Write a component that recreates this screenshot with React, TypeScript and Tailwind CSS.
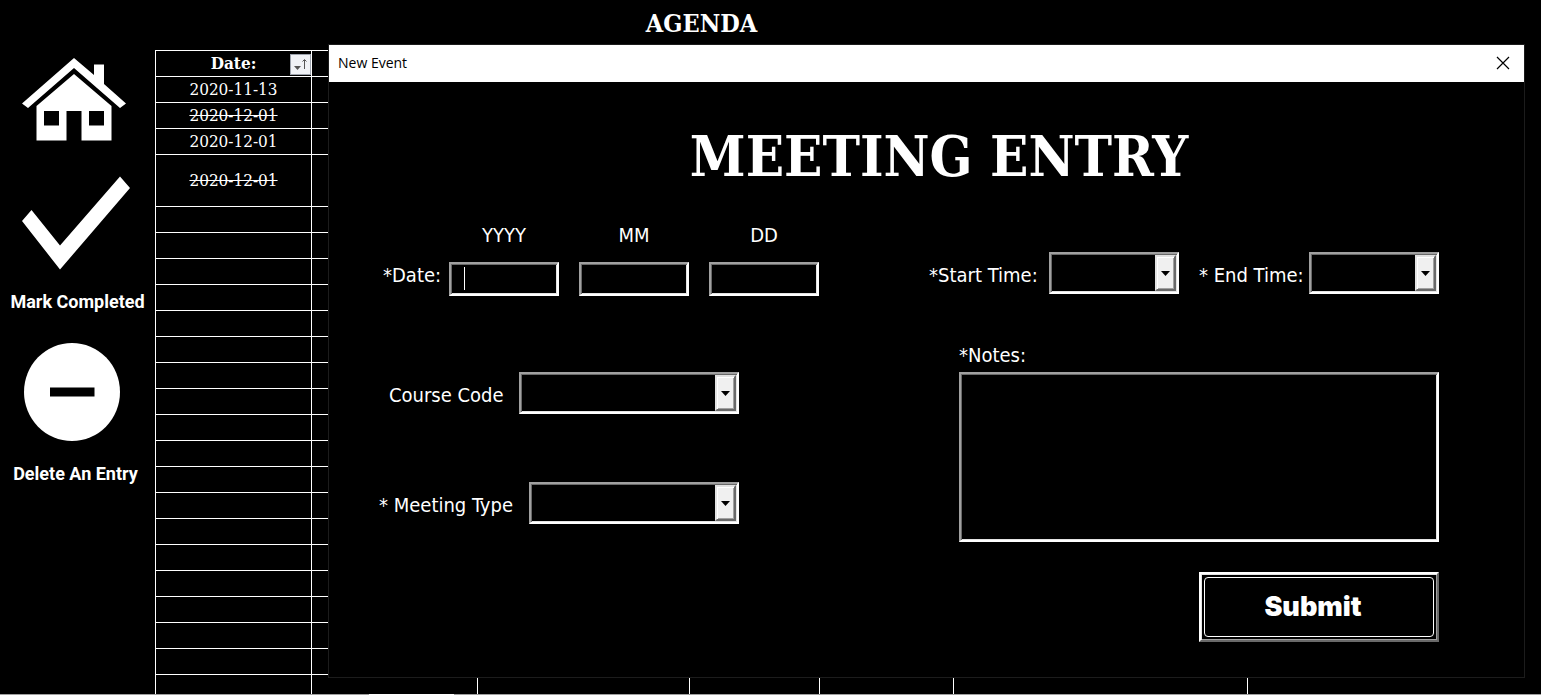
import type { ReactNode } from "react";

const slab = "font-['Roboto_Slab','DejaVu_Serif_Condensed','DejaVu_Serif',serif]";
const labelFont = "font-['DejaVu_Sans_Condensed','DejaVu_Sans',sans-serif] text-xl leading-6 text-white whitespace-nowrap";
const sunken =
  "rounded-none border-2 border-t-[#a0a0a0] border-l-[#a0a0a0] border-r-white border-b-white bg-black text-white outline-none shadow-[inset_1px_1px_0_#696969,inset_-1px_-1px_0_#e3e3e3]";

const rows = [
  { date: "2020-11-13", done: false, tall: false },
  { date: "2020-12-01", done: true, tall: false },
  { date: "2020-12-01", done: false, tall: false },
  { date: "2020-12-01", done: true, tall: true },
  ...Array.from({ length: 19 }, () => ({ date: "", done: false, tall: false })),
];

function Sidebar() {
  return (
    <nav className="flex w-[155px] shrink-0 flex-col font-['Roboto',sans-serif] text-lg leading-6 font-bold text-white">
      <button type="button" aria-label="Home" className="mt-[57px] ml-[21px] w-[106px]">
        <svg viewBox="0 0 106 84" className="block h-[84px] w-[106px]" fill="white">
          <path d="M53 1 73 18V7.500h10V27l22 19.500-6 4.500L53 11 7 51 1 46.500Z" />
          <path fillRule="evenodd" d="M53 17 90.500 49V83.500H60.500V54H45.500V83.500H15.500V49ZM23 54V68.500H38V54ZM68 54V68.500H83V54Z" />
        </svg>
      </button>
      <button type="button" className="mt-[35px] flex w-full flex-col items-center pr-1 whitespace-nowrap">
        <svg viewBox="0 0 110 94" className="h-[94px] w-[110px]" fill="white">
          <path d="M1 45 10.500 34 39 69.500 99 0.500 109 12 39 93.500Z" />
        </svg>
        <span className="mt-5 pl-1">Mark Completed</span>
      </button>
      <button type="button" className="mt-[29px] flex w-full flex-col items-center pr-3 whitespace-nowrap">
        <svg viewBox="0 0 96 98" className="h-[98px] w-24">
          <ellipse cx="48" cy="49" rx="48" ry="49" fill="white" />
          <rect x="26" y="44.500" width="44.500" height="9" fill="black" />
        </svg>
        <span className="mt-[21px] pl-2">Delete An Entry</span>
      </button>
    </nav>
  );
}

function Agenda() {
  return (
    <main className={`${slab} w-[1093px] shrink-0 text-white`}>
      <h1 className="flex h-[50px] items-center justify-center pb-0.5 text-[25px] leading-8 font-bold">AGENDA</h1>
      <table className="w-full table-fixed border-collapse text-center text-[17px] leading-5">
        <colgroup>
          <col className="w-[156px]" />
          <col className="w-[166px]" />
          <col className="w-[212px]" />
          <col className="w-[130px]" />
          <col className="w-[134px]" />
          <col />
        </colgroup>
        <thead>
          <tr className="h-[26px]">
            <th className="relative border border-white p-0 pb-0.5 font-bold">
              Date:
              <button
                type="button"
                aria-label="Sort by date"
                className="absolute top-[3px] right-0 size-[21px] border border-[#9da3ad] bg-[#f0f2f6]"
              >
                <svg viewBox="0 0 19 19" className="size-[19px]">
                  <path d="M3 11h7L6.500 15Z" fill="#555" />
                  <path d="M13.500 14V5M11.500 6.500l2-2 2 2" fill="none" stroke="#555" />
                </svg>
              </button>
            </th>
            {[1, 2, 3, 4, 5].map((c) => (
              <th key={c} className="border border-white p-0" />
            ))}
          </tr>
        </thead>
        <tbody>
          {rows.map((row, i) => (
            <tr key={i} className={row.tall ? "h-[52px]" : "h-[26px]"}>
              <td className={row.done ? "border border-white p-0 pb-0.5 line-through" : "border border-white p-0 pb-0.5"}>
                {row.date}
              </td>
              {[1, 2, 3, 4, 5].map((c) => (
                <td key={c} className="border border-white p-0" />
              ))}
            </tr>
          ))}
        </tbody>
      </table>
    </main>
  );
}

function Dropdown({ id, className }: { id: string; className: string }) {
  return (
    <span className={`relative block h-[42px] shrink-0 ${className}`}>
      <select id={id} className={`${sunken} block h-full w-full appearance-none`} />
      <span className="pointer-events-none absolute top-[3px] right-[3px] bottom-[3px] flex w-[21px] border-2 border-t-[#e3e3e3] border-r-[#696969] border-b-[#696969] border-l-[#e3e3e3] bg-[#f0f0f0] shadow-[inset_1px_1px_0_white,inset_-1px_-1px_0_#a0a0a0]">
        <svg viewBox="0 0 9 5" className="m-auto h-[5px] w-[9px]">
          <path d="M0 0h9L4.500 5Z" />
        </svg>
      </span>
    </span>
  );
}

function Label({ id, className, children }: { id: string; className?: string; children: ReactNode }) {
  return (
    <label htmlFor={id} className={`${labelFont} ${className ?? ""}`}>
      {children}
    </label>
  );
}

function EventDialog() {
  return (
    <section
      role="dialog"
      aria-labelledby="dialog-title"
      className="absolute top-11 right-4 left-[328px] border border-[#1c1c1c] bg-black"
    >
      <header className="flex h-[37px] items-center justify-between bg-white pr-[14px] pb-px pl-[9px] text-black">
        <h2 id="dialog-title" className="font-['Open_Sans','Noto_Sans',sans-serif] text-sm leading-5">
          New Event
        </h2>
        <button type="button" aria-label="Close">
          <svg viewBox="0 0 14 14" className="size-[14px]" stroke="black" strokeWidth="1.200">
            <path d="M1 1 13 13M13 1 1 13" />
          </svg>
        </button>
      </header>
      <form className="pr-[85px] pb-[35px] pl-[50px]" onSubmit={(e) => e.preventDefault()}>
        <h3 className={`${slab} pt-[38px] pl-[60px] text-center text-[56px] leading-[72px] font-bold text-white`}>
          MEETING ENTRY
        </h3>
        <div className="mt-[31px] flex justify-between gap-8">
          <div className="w-[440px]">
            <div className="flex items-end gap-5">
              <Label id="year" className="-mr-5 w-[70px] pb-[9px] pl-1">*Date:</Label>
              <div className="flex w-[110px] flex-col items-center gap-[15px]">
                <Label id="year">YYYY</Label>
                <span className="relative block">
                  <input id="year" className={`${sunken} block h-[34px] w-[110px] px-3`} />
                  <span className="absolute top-[5px] left-[15px] h-[23px] w-px bg-white" />
                </span>
              </div>
              <div className="flex w-[110px] flex-col items-center gap-[15px]">
                <Label id="month">MM</Label>
                <input id="month" className={`${sunken} block h-[34px] w-full px-3`} />
              </div>
              <div className="flex w-[110px] flex-col items-center gap-[15px]">
                <Label id="day">DD</Label>
                <input id="day" className={`${sunken} block h-[34px] w-full px-3`} />
              </div>
            </div>
            <div className="mt-[76px] flex w-[360px] items-center justify-between pl-[10px]">
              <Label id="course" className="pt-1">Course Code</Label>
              <Dropdown id="course" className="w-[220px]" />
            </div>
            <div className="mt-[68px] flex w-[360px] items-center justify-between">
              <Label id="type" className="pt-1">* Meeting Type</Label>
              <Dropdown id="type" className="w-[210px]" />
            </div>
          </div>
          <div className="flex w-[510px] flex-col items-end pt-[29px]">
            <div className="flex w-full items-center justify-between">
              <div className="flex w-[250px] items-center justify-between">
                <Label id="start" className="pt-1">*Start Time:</Label>
                <Dropdown id="start" className="w-[130px]" />
              </div>
              <div className="flex w-60 items-center justify-between">
                <Label id="end" className="pt-1">* End Time:</Label>
                <Dropdown id="end" className="w-[130px]" />
              </div>
            </div>
            <div className="mt-[49px] flex w-[480px] flex-col gap-[5px]">
              <Label id="notes">*Notes:</Label>
              <textarea id="notes" className={`${sunken} block h-[170px] w-full resize-none p-2`} />
            </div>
            <button
              type="submit"
              className="mt-[30px] h-[70px] w-60 border-2 border-t-white border-r-[#696969] border-b-[#696969] border-l-white bg-black p-[3px] text-white shadow-[inset_1px_1px_0_#e3e3e3,inset_-1px_-1px_0_#a0a0a0]"
            >
              <span className="flex h-full items-center justify-center rounded border border-white pr-3 font-['Inter',sans-serif] text-[27px] leading-8 font-black">
                Submit
              </span>
            </button>
          </div>
        </div>
      </form>
    </section>
  );
}

export default function App() {
  return (
    <div className="relative flex h-screen flex-col overflow-hidden bg-black">
      <div className="flex min-h-0 flex-1 overflow-hidden">
        <Sidebar />
        <Agenda />
      </div>
      <footer className="flex h-px shrink-0 bg-[#a0a0a0] pl-[369px]">
        <span className="w-[85px] bg-white" />
      </footer>
      <EventDialog />
    </div>
  );
}
